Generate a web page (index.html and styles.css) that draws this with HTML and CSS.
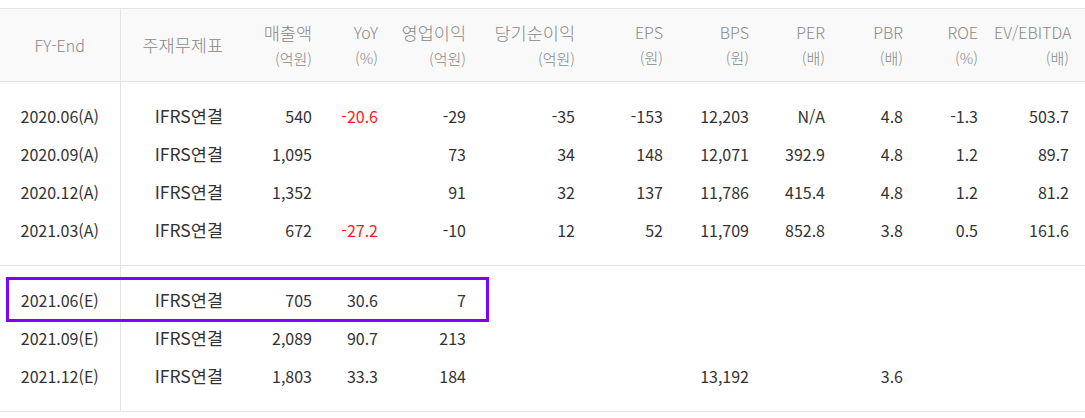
FILE: index.html
```html
<!DOCTYPE html>
<html lang="ko">
<head>
<meta charset="utf-8">
<link rel="stylesheet" href="styles.css">
</head>
<body>
<div class="wrap">
<table class="fin">
<colgroup>
<col class="c1"><col class="c2"><col class="c3"><col class="c4"><col class="c5"><col class="c6"><col class="c7"><col class="c8"><col class="c9"><col class="c10"><col class="c11"><col class="c12">
</colgroup>
<thead>
<tr>
<th class="first">FY-End</th>
<th class="split"><span class="kr">주재무제표</span></th>
<th><span class="kr">매출액</span><br><span class="unit">(억원)</span></th>
<th>YoY<br><span class="unit">(%)</span></th>
<th><span class="kr">영업이익</span><br><span class="unit">(억원)</span></th>
<th><span class="kr">당기순이익</span><br><span class="unit">(억원)</span></th>
<th>EPS<br><span class="unit">(원)</span></th>
<th>BPS<br><span class="unit">(원)</span></th>
<th>PER<br><span class="unit">(배)</span></th>
<th>PBR<br><span class="unit">(배)</span></th>
<th>ROE<br><span class="unit">(%)</span></th>
<th>EV/EBITDA<br><span class="unit">(배)</span></th>
</tr>
</thead>
<tbody class="group">
<tr class="top"><td class="first">2020.06(A)</td><td class="split std">IFRS연결</td><td>540</td><td class="neg">-20.6</td><td>-29</td><td>-35</td><td>-153</td><td>12,203</td><td>N/A</td><td>4.8</td><td>-1.3</td><td>503.7</td></tr>
<tr><td class="first">2020.09(A)</td><td class="split std">IFRS연결</td><td>1,095</td><td></td><td>73</td><td>34</td><td>148</td><td>12,071</td><td>392.9</td><td>4.8</td><td>1.2</td><td>89.7</td></tr>
<tr><td class="first">2020.12(A)</td><td class="split std">IFRS연결</td><td>1,352</td><td></td><td>91</td><td>32</td><td>137</td><td>11,786</td><td>415.4</td><td>4.8</td><td>1.2</td><td>81.2</td></tr>
<tr class="bottom"><td class="first">2021.03(A)</td><td class="split std">IFRS연결</td><td>672</td><td class="neg">-27.2</td><td>-10</td><td>12</td><td>52</td><td>11,709</td><td>852.8</td><td>3.8</td><td>0.5</td><td>161.6</td></tr>
</tbody>
<tbody class="group">
<tr class="top"><td class="first">2021.06(E)</td><td class="split std">IFRS연결</td><td>705</td><td>30.6</td><td>7</td><td></td><td></td><td></td><td></td><td></td><td></td><td></td></tr>
<tr><td class="first">2021.09(E)</td><td class="split std">IFRS연결</td><td>2,089</td><td>90.7</td><td>213</td><td></td><td></td><td></td><td></td><td></td><td></td><td></td></tr>
<tr class="bottom"><td class="first">2021.12(E)</td><td class="split std">IFRS연결</td><td>1,803</td><td>33.3</td><td>184</td><td></td><td></td><td>13,192</td><td></td><td>3.6</td><td></td><td></td></tr>
</tbody>
</table>
<div class="highlight"></div>
</div>
</body>
</html>
```

FILE: styles.css
```css
html, body {
  margin: 0;
  padding: 0;
  background: #fff;
}
body {
  padding-top: 8px;
  font-family: "Noto Sans CJK KR", "Noto Sans", sans-serif;
}
.wrap {
  position: relative;
  width: 1085px;
}
.fin {
  width: 1085px;
  border-collapse: collapse;
  table-layout: fixed;
  border-top: 1px solid #e4e4e4;
}
.c1 { width: 120px; }
.c2 { width: 119px; }
.c3 { width: 89px; }
.c4 { width: 66px; }
.c5 { width: 88px; }
.c6 { width: 109px; }
.c7 { width: 88px; }
.c8 { width: 86px; }
.c9 { width: 76px; }
.c10 { width: 78px; }
.c11 { width: 75px; }
.c12 { width: 91px; }

.fin th {
  height: 72px;
  padding: 0 16px 0 0;
  background: #f9f9f9;
  color: #888;
  font-weight: 300;
  font-size: 16px;
  line-height: 25px;
  text-align: right;
  white-space: nowrap;
  border-bottom: 1px solid #e4e4e4;
}
.fin th .kr {
  font-size: 17.5px;
}
.fin th.first, .fin td.first {
  text-align: center;
  padding: 0;
}
.fin .split {
  border-left: 1px solid #e4e4e4;
}
.unit {
  font-size: 15px;
}
.fin td {
  height: 38px;
  padding: 0 16px 0 0;
  color: #333;
  font-size: 16px;
  line-height: 20px;
  text-align: right;
  white-space: nowrap;
}
.fin td.std {
  font-size: 17.5px;
}
.fin tr.top td {
  padding-top: 15px;
}
.fin tr.bottom td {
  padding-bottom: 16px;
}
.fin tbody.group {
  border-bottom: 1px solid #e4e4e4;
}
.fin td.neg {
  color: #ff1a1a;
}
.highlight {
  position: absolute;
  left: 6px;
  top: 269px;
  width: 477px;
  height: 39px;
  border: 3px solid #7f00ff;
}
```
